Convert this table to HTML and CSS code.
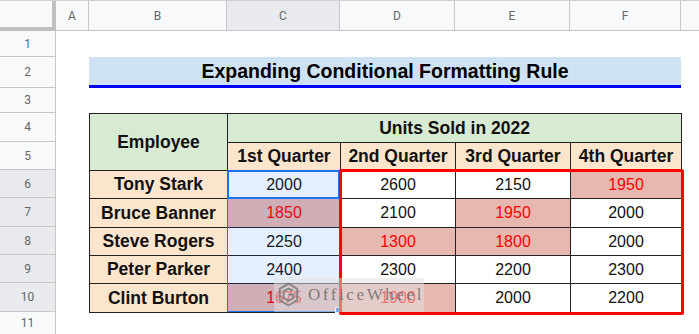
FILE: index.html
```html
<!DOCTYPE html>
<html>
<head>
<meta charset="utf-8">
<link rel="stylesheet" href="styles.css">
</head>
<body>
<div class="sheet">
  <div class="corner"></div>
  <div class="colhead">A</div>
  <div class="colhead">B</div>
  <div class="colhead sel">C</div>
  <div class="colhead">D</div>
  <div class="colhead">E</div>
  <div class="colhead">F</div>
  <div class="colhead last"></div>

  <div class="rowhead r1">1</div>
  <div class="rowhead r2">2</div>
  <div class="rowhead r3">3</div>
  <div class="rowhead r4">4</div>
  <div class="rowhead r5">5</div>
  <div class="rowhead r6 sel">6</div>
  <div class="rowhead r7 sel">7</div>
  <div class="rowhead r8 sel">8</div>
  <div class="rowhead r9 sel">9</div>
  <div class="rowhead r10 sel">10</div>
  <div class="rowhead r11">11</div>

  <div class="title">Expanding Conditional Formatting Rule</div>

  <table class="data">
    <colgroup>
      <col class="c-b"><col class="c-c"><col class="c-d"><col class="c-e"><col class="c-f">
    </colgroup>
    <tr class="h4">
      <th class="green" rowspan="2">Employee</th>
      <th class="green" colspan="4">Units Sold in 2022</th>
    </tr>
    <tr class="h5">
      <th class="peach">1st Quarter</th>
      <th class="peach">2nd Quarter</th>
      <th class="peach">3rd Quarter</th>
      <th class="peach">4th Quarter</th>
    </tr>
    <tr class="h6">
      <th class="peach">Tony Stark</th>
      <td>2000</td><td>2600</td><td>2150</td><td class="hi">1950</td>
    </tr>
    <tr class="h7">
      <th class="peach">Bruce Banner</th>
      <td class="hi">1850</td><td>2100</td><td class="hi">1950</td><td>2000</td>
    </tr>
    <tr class="h8">
      <th class="peach">Steve Rogers</th>
      <td>2250</td><td class="hi">1300</td><td class="hi">1800</td><td>2000</td>
    </tr>
    <tr class="h9">
      <th class="peach">Peter Parker</th>
      <td>2400</td><td>2300</td><td>2200</td><td>2300</td>
    </tr>
    <tr class="h10">
      <th class="peach">Clint Burton</th>
      <td class="hi">1675</td><td class="hi">1900</td><td>2000</td><td>2200</td>
    </tr>
  </table>

  <div class="selection"></div>
  <div class="active"></div>
  <div class="handle"></div>
  <div class="redbox"></div>
  <div class="watermark">
    <svg class="wm-logo" width="24" height="30" viewBox="0 0 24 30">
      <path d="M12 2 L22 8 L22 21 L12 27 L2 21 L2 8 Z" fill="none" stroke="#7a7a7a" stroke-width="2.2"/>
      <path d="M17 10 L12 7.5 L6.5 10.5 L6.5 18.5 L12 21.5 L17 19 L17 14.5 L12 14.5" fill="none" stroke="#7a7a7a" stroke-width="2.2"/>
    </svg>
    <span class="wm-text">OfficeWheel</span>
  </div>
</div>
</body>
</html>
```
FILE: styles.css
```css
* { box-sizing: border-box; }
html, body { margin: 0; padding: 0; background: #fff; overflow: hidden; }
body { width: 699px; height: 334px; }

.sheet {
  position: relative;
  display: grid;
  grid-template-columns: 56px 33px 138px 113px 115px 115px 111px 18px;
  grid-template-rows: 30px 26px 31px 25px 29px 28px 28px 29px 28px 28px 29px 23px;
  width: 699px;
  height: 334px;
  font-family: "Liberation Sans", Arial, sans-serif;
  border-top: 1px solid #d0d0d0;
}

.corner {
  background: #f8f9fa;
  border-right: 4px solid #c0c0c0;
  border-bottom: 4px solid #c0c0c0;
}
.colhead {
  background: #f8f9fa;
  border-right: 1px solid #c7c7c7;
  border-bottom: 1px solid #c7c7c7;
  display: flex;
  align-items: center;
  justify-content: center;
  font-family: Roboto, "Liberation Sans", sans-serif;
  font-size: 12px;
  color: #666;
}
.colhead.sel { background: #e8eaed; }
.colhead.last { border-right: none; }

.rowhead {
  grid-column: 1;
  background: #f8f9fa;
  border-right: 1px solid #c7c7c7;
  border-bottom: 1px solid #c7c7c7;
  display: flex;
  align-items: center;
  justify-content: center;
  font-family: Roboto, "Liberation Sans", sans-serif;
  font-size: 12px;
  color: #666;
}
.rowhead.sel { background: #e8eaed; }
.r1 { grid-row: 2; } .r2 { grid-row: 3; } .r3 { grid-row: 4; }
.r4 { grid-row: 5; } .r5 { grid-row: 6; } .r6 { grid-row: 7; }
.r7 { grid-row: 8; } .r8 { grid-row: 9; } .r9 { grid-row: 10; }
.r10 { grid-row: 11; } .r11 { grid-row: 12; }

.title {
  grid-column: 3 / 8;
  grid-row: 3;
  background: #cfe2f3;
  border-bottom: 3px solid #0000ff;
  display: flex;
  align-items: center;
  justify-content: center;
  font-weight: bold;
  font-size: 19.5px;
  color: #000;
  padding-top: 1px;
}

.data {
  grid-column: 3 / 8;
  grid-row: 5 / 12;
  border-collapse: collapse;
  table-layout: fixed;
  width: 592px;
  height: 199px;
  border: 1.5px solid #444;
}
.c-b { width: 138px; } .c-c { width: 113px; } .c-d { width: 115px; }
.c-e { width: 115px; } .c-f { width: 111px; }
.h4 { height: 29px; } .h5 { height: 28px; } .h6 { height: 28px; }
.h7 { height: 29px; } .h8 { height: 28px; } .h9 { height: 28px; } .h10 { height: 29px; }

.data th, .data td {
  border: 1px solid #222;
  padding: 0;
  text-align: center;
  vertical-align: middle;
  white-space: nowrap;
  overflow: hidden;
}
.data th {
  font-weight: bold;
  font-size: 17.5px;
  color: #111;
}
.data td {
  font-size: 16px;
  color: #111;
  background: #fff;
}
.green { background: #d9ead3; }
.peach { background: #fce5cd; }
.data td.hi { background: #e6b8af; color: #ff0000; }

.selection {
  position: absolute;
  left: 227px;
  top: 169px;
  width: 113px;
  height: 142px;
  background: rgba(14, 101, 235, 0.1);
  border: 1px solid #1a73e8;
  pointer-events: none;
}
.active {
  position: absolute;
  left: 227px;
  top: 169px;
  width: 113px;
  height: 29px;
  border: 2px solid #1a73e8;
}
.handle {
  position: absolute;
  left: 335px;
  top: 306px;
  width: 6px;
  height: 6px;
  background: #1a73e8;
  border: 1px solid #fff;
}
.redbox {
  position: absolute;
  left: 339px;
  top: 168px;
  width: 345px;
  height: 146px;
  border: 3.5px solid #ff0000;
  border-radius: 2px;
}
.watermark {
  position: absolute;
  left: 274px;
  top: 277px;
  width: 150px;
  height: 34px;
  background: rgba(225, 225, 225, 0.5);
  display: flex;
  align-items: center;
  padding-left: 4px;
  gap: 9px;
}
.wm-logo { opacity: 0.85; }
.wm-text {
  font-family: "Liberation Serif", serif;
  font-size: 17px;
  letter-spacing: 2.6px;
  color: rgba(100, 100, 100, 0.8);
}
```
